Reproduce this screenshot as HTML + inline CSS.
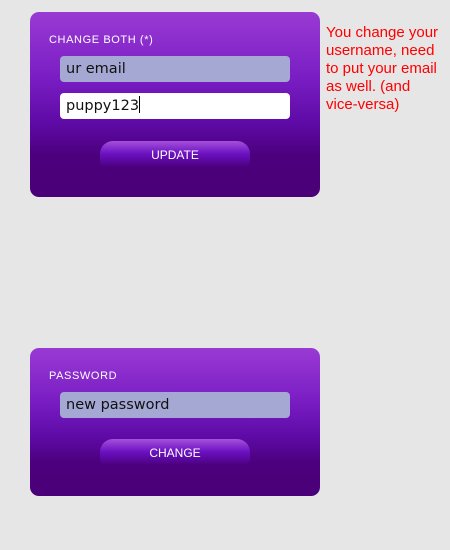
<!DOCTYPE html>
<html><head><style>
body{margin:0;width:450px;height:550px;background:#e6e6e6;font-family:"Liberation Sans",sans-serif;position:relative;overflow:hidden}
.p{position:absolute;left:30px;width:290px;border-radius:9px;background:linear-gradient(#9a3ad4 0%,#7a1ec4 35%,#5e0aa6 60%,#4c007c 78%,#4a0078 100%)}
.l{position:absolute;left:19px;color:#fff;font-size:11px;letter-spacing:.6px}
.i{position:absolute;left:30px;width:230px;height:26px;line-height:26px;border-radius:4px;background:#a6a8d4;font-size:14.5px;color:#111;box-sizing:border-box;padding:0 0 0 6px;font-family:"DejaVu Sans",sans-serif}
.w{background:#fff}
.b{position:absolute;left:70px;width:150px;height:26px;border-radius:13px 13px 6px 6px;background:linear-gradient(#a650dc,#6a10c0 50%,#4c0080);color:#fff;font-size:12px;text-align:center;line-height:28px}
.t{position:absolute;left:326px;top:24px;color:#f00;font-size:15px;line-height:18px;white-space:nowrap}
</style></head><body>
<div class="p" style="top:12px;height:185px">
<div class="l" style="top:22px">CHANGE BOTH (*)</div>
<div class="i" style="top:44px">ur email</div>
<div class="i w" style="top:81px">puppy123<span style="display:inline-block;width:1px;height:17px;background:#000;vertical-align:-3px"></span></div>
<div class="b" style="top:129px">UPDATE</div>
</div>
<div class="t">You change your<br>username, need<br>to put your email<br>as well. (and<br>vice-versa)</div>
<div class="p" style="top:348px;height:148px">
<div class="l" style="top:22px">PASSWORD</div>
<div class="i" style="top:44px">new password</div>
<div class="b" style="top:91px">CHANGE</div>
</div>
</body></html>
